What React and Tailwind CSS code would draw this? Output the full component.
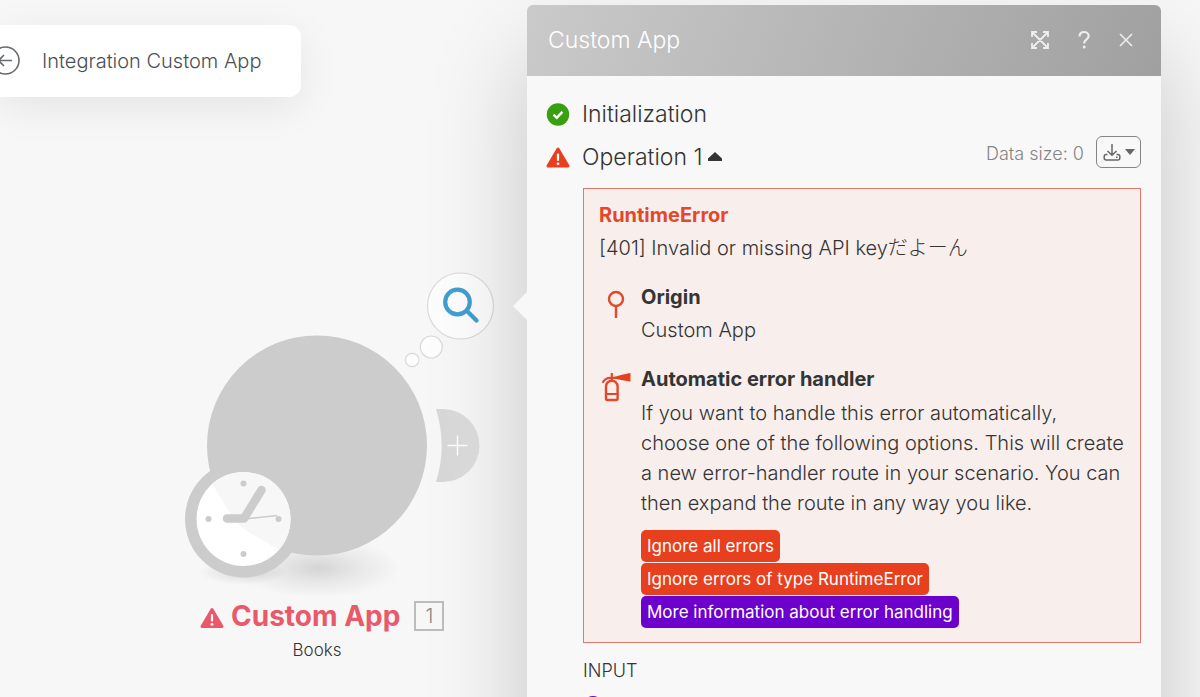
import { useState } from 'react';

const options = [
  { label: 'Ignore all errors', color: 'bg-[#e83f1f]' },
  { label: 'Ignore errors of type RuntimeError', color: 'bg-[#e83f1f]' },
  { label: 'More information about error handling', color: 'bg-[#6c00cc]' },
];

function WarningIcon({ className }) {
  return (
    <svg viewBox="0 0 24 21" className={className} aria-hidden="true">
      <path d="M12 2 22 19H2Z" fill="currentColor" stroke="currentColor" strokeWidth="3" strokeLinejoin="round" />
      <path d="M12 7.5v5.5" stroke="#fff" strokeWidth="2.2" strokeLinecap="round" />
      <circle cx="12" cy="16.8" r="1.4" fill="#fff" />
    </svg>
  );
}

function ModuleDrawing() {
  return (
    <svg viewBox="180 265 320 335" className="block h-[335px] w-[320px]" aria-hidden="true">
      <defs>
        <radialGradient id="floor">
          <stop offset="0" stopColor="#000" stopOpacity="0.14" />
          <stop offset="0.5" stopColor="#000" stopOpacity="0.06" />
          <stop offset="1" stopColor="#000" stopOpacity="0" />
        </radialGradient>
        <linearGradient id="tab" x1="0" x2="1">
          <stop offset="0" stopColor="#d6d6d6" />
          <stop offset="1" stopColor="#e0e0e0" />
        </linearGradient>
        <clipPath id="face">
          <circle cx="243.5" cy="519" r="47" />
        </clipPath>
      </defs>
      <ellipse cx="318" cy="568" rx="84" ry="30" fill="url(#floor)" />
      <ellipse cx="243" cy="572" rx="44" ry="13" fill="url(#floor)" />
      <circle cx="317" cy="445.5" r="110" fill="#ccc" />

      {/* Add-next tab */}
      <path d="M436 409h7a36.500 36.500 0 0 1 0 73h-7a123 123 0 0 0 0-73Z" fill="url(#tab)" />
      <path d="M447.500 445.500h20M457.500 435.500v20" stroke="#fff" strokeWidth="1.5" />

      {/* Clock */}
      <circle cx="243.5" cy="519" r="58.5" fill="#ccc" />
      <circle cx="243.5" cy="519" r="47" fill="#fff" />
      <path d="M211 482 228 510Q236 525 250 533L285 553 310 500 260 460Z" fill="#f7f7f7" clipPath="url(#face)" />
      <g fill="#ccc">
        <circle cx="243.5" cy="483.5" r="3" />
        <circle cx="208.5" cy="519" r="3" />
        <circle cx="278.5" cy="519" r="3" />
        <circle cx="243.5" cy="554" r="3" />
      </g>
      <path d="M227 518.500h17L261.500 490" fill="none" stroke="#ccc" strokeWidth="8.5" strokeLinecap="round" strokeLinejoin="round" />
      <path d="M244 519 277 515.500" stroke="#ccc" strokeWidth="1.5" />

      {/* Bubble */}
      <g fill="#fdfdfd" stroke="#dadada" strokeWidth="1.2">
        <circle cx="460.5" cy="306" r="33" />
        <circle cx="431.3" cy="347" r="11" />
        <circle cx="412.2" cy="360" r="6.7" />
      </g>
      <circle cx="457.5" cy="302" r="12.3" fill="none" stroke="#429fd2" strokeWidth="4.2" />
      <path d="m467 311 9.500 9.500" stroke="#429fd2" strokeWidth="4.2" strokeLinecap="round" />
    </svg>
  );
}

function ErrorBox() {
  return (
    <section className="ml-[37px] border border-[#e0786c] bg-[#f8eeec] px-[15px] pt-3 pb-[14px] text-[20px] leading-[29px] font-light">
      <h2 className="font-bold text-[#e2492b]">RuntimeError</h2>
      <p className="mt-1">[401] Invalid or missing API keyだよーん</p>

      <div className="mt-5 flex">
        <div className="w-[42px] shrink-0">
          <svg viewBox="0 0 34 34" className="mt-1.5 size-[34px]" fill="none" stroke="#e2492b" strokeWidth="2.4" aria-hidden="true">
            <circle cx="17" cy="10" r="7" />
            <path d="M17 17v12" />
          </svg>
        </div>
        <div>
          <h3 className="font-bold">Origin</h3>
          <p className="mt-1">Custom App</p>
        </div>
      </div>

      <div className="mt-5 flex">
        <div className="w-[42px] shrink-0">
          <svg viewBox="0 0 34 34" className="mt-1.5 size-[34px]" fill="none" stroke="#e2492b" aria-hidden="true">
            <path d="M15 6 22 4 31 2Q31.500 2 31.500 2.500V10Q31.500 10.500 31 10.500L22 9 15 7.500Z" fill="#e83f1f" stroke="none" />
            <path d="M7 27.500V15.500a5.800 5.800 0 0 1 11.600 0V27.500a1.500 1.500 0 0 1-1.500 1.500H8.500A1.500 1.500 0 0 1 7 27.500Z" strokeWidth="2.4" />
            <path d="M7 23h11.600" strokeWidth="2" />
            <path d="M12.800 2v8M17 6.800h-5.500c-4 0-6.500 2-8 5" strokeWidth="2.2" />
          </svg>
        </div>
        <div>
          <h3 className="font-bold">Automatic error handler</h3>
          <p className="mt-1 leading-[30px]">
            If you want to handle this error automatically, choose one of the following options. This will create a
            new error-handler route in your scenario. You can then expand the route in any way you like.
          </p>
          <div className="mt-3 flex flex-col items-start gap-px">
            {options.map((o) => (
              <button
                key={o.label}
                className={`h-8 rounded-[5px] px-1.5 text-[17px] font-normal whitespace-nowrap text-white ${o.color}`}
              >
                {o.label}
              </button>
            ))}
          </div>
        </div>
      </div>
    </section>
  );
}

export default function App() {
  const [open, setOpen] = useState(true);

  return (
    <main className="relative flex h-screen justify-between overflow-hidden bg-[#f7f7f7] font-['Inter','Noto_Sans_CJK_JP',sans-serif] text-[#343434]">
      {/* Scenario title bar */}
      <header className="mt-[25px] flex h-[72px] w-[301px] shrink-0 items-center rounded-r-xl bg-white shadow-[0_10px_40px_rgba(0,0,0,0.08)]">
        <button aria-label="Back" className="-ml-[10px] shrink-0 text-[#666b6d]">
          <svg viewBox="0 0 30 30" className="size-[30px]" fill="none" stroke="currentColor" strokeWidth="1.6" aria-hidden="true">
            <circle cx="15.5" cy="14.5" r="13.5" />
            <path d="M22 14.500H9M14 9l-5.500 5.500L14 20" />
          </svg>
        </button>
        <h1 className="ml-[22px] text-[20px] font-light whitespace-nowrap text-[#4a5053]">Integration Custom App</h1>
      </header>

      {/* Module on the canvas */}
      <div className="absolute top-[265px] left-[180px] w-[320px]">
        <ModuleDrawing />
        <div className="flex h-8 items-center pl-5 text-[#e9596a]">
          <WarningIcon className="mt-1 h-[22px] w-6" />
          <span className="ml-[7px] text-[28px] font-bold whitespace-nowrap">Custom App</span>
          <span className="ml-[14px] flex size-[30px] items-center justify-center border-2 border-[#bdbdbd] text-[20px] font-light text-[#888]">
            1
          </span>
        </div>
        <p className="mt-[6px] w-[274px] text-center text-[17px] leading-6 font-light">Books</p>
      </div>

      {/* Operation detail panel */}
      <aside className="relative mt-[5px] mr-[39px] h-[960px] w-[634px] shrink-0 rounded-t-md bg-[#f8f8f8] shadow-[0_50px_100px_rgba(0,0,0,0.2)]">
        <svg viewBox="0 0 14 28" className="absolute top-[287px] -left-[14px] h-7 w-[14px]" aria-hidden="true">
          <path d="M14 0v28L0 14Z" fill="#f8f8f8" />
        </svg>
        <div className="flex h-[71px] items-center justify-between rounded-t-md bg-linear-110 from-[#cacaca] to-[#a0a0a0] pr-[25px] pl-[21px] text-white">
          <h2 className="text-[23px] font-light">Custom App</h2>
          <div className="flex items-center pb-0.5 text-white/80">
            <button aria-label="Expand">
              <svg viewBox="0 0 20 20" className="size-5" fill="none" stroke="currentColor" strokeWidth="1.8" aria-hidden="true">
                <path d="M7 2H2v5M13 2h5v5M7 18H2v-5M13 18h5v-5M2 2l16 16M18 2 2 18" />
              </svg>
            </button>
            <button aria-label="Help" className="ml-6">
              <svg viewBox="0 0 20 20" className="size-5" fill="none" stroke="currentColor" strokeWidth="2.2" aria-hidden="true">
                <path d="M5.500 6.500C5.500 3.500 7.500 2 10 2s4.700 1.500 4.700 4c0 3.500-4.500 3.500-4.500 7.500" />
                <circle cx="10.2" cy="17" r="1.5" fill="currentColor" stroke="none" />
              </svg>
            </button>
            <button aria-label="Close" className="ml-[22px]">
              <svg viewBox="0 0 20 20" className="size-5" fill="none" stroke="currentColor" strokeWidth="1.6" aria-hidden="true">
                <path d="m4 4 12 12M16 4 4 16" />
              </svg>
            </button>
          </div>
        </div>

        <div className="pt-[17px] pr-5 pl-[19px]">
          <div className="flex h-[43px] items-center">
            <svg viewBox="0 0 24 24" className="size-6" aria-hidden="true">
              <circle cx="12" cy="11.5" r="11.2" fill="#38a010" />
              <path d="m7.500 11.700 3.300 3.200 5.600-6" fill="none" stroke="#fff" strokeWidth="2.4" />
            </svg>
            <span className="ml-3 text-[23px] font-light">Initialization</span>
          </div>
          <div className="flex h-[43px] items-center">
            <WarningIcon className="h-[21px] w-6 text-[#e83f1f]" />
            <button className="ml-3 flex items-center text-[23px] font-light" onClick={() => setOpen(!open)}>
              Operation 1
              <svg viewBox="0 0 14 9" className="mb-0.5 ml-[6px] h-[9px] w-[14px]" aria-hidden="true">
                <path d="m7 0 7 6.500V9H0V6.500Z" fill="#343434" />
              </svg>
            </button>
            <span className="mb-2 ml-auto text-[18px] font-light text-[#858585]">Data size: 0</span>
            <button
              aria-label="Download"
              className="mb-3 ml-3 flex h-8 w-[45px] items-center justify-center gap-1 rounded-md border border-[#858585] text-[#666]"
            >
              <svg viewBox="0 0 18 18" className="size-[18px]" fill="none" stroke="currentColor" strokeWidth="1.5" aria-hidden="true">
                <path d="M9 1v11M4.500 8 9 12.300 13.500 8" />
                <path d="M4.500 11.500H3.200a2 2 0 0 0-2 2v1.500a2 2 0 0 0 2 2h11.600a2 2 0 0 0 2-2v-1.500a2 2 0 0 0-2-2h-1.300" />
                <path d="M13 14.300h1.500" />
              </svg>
              <svg viewBox="0 0 10 6" className="h-[6px] w-[10px]" aria-hidden="true">
                <path d="M0 0h10L5 6Z" fill="currentColor" />
              </svg>
            </button>
          </div>

          {open && (
            <div className="mt-[9px]">
              <ErrorBox />
              <h2 className="mt-[15px] ml-[37px] text-[18px] leading-[26px] font-light">INPUT</h2>
              <svg viewBox="0 0 20 20" className="mt-3 ml-[37px] size-5" fill="none" stroke="#6c00cc" strokeWidth="2" aria-hidden="true">
                <circle cx="10" cy="10" r="9" />
                <path d="M6 10h8M10 6v8" />
              </svg>
            </div>
          )}
        </div>
      </aside>
    </main>
  );
}
